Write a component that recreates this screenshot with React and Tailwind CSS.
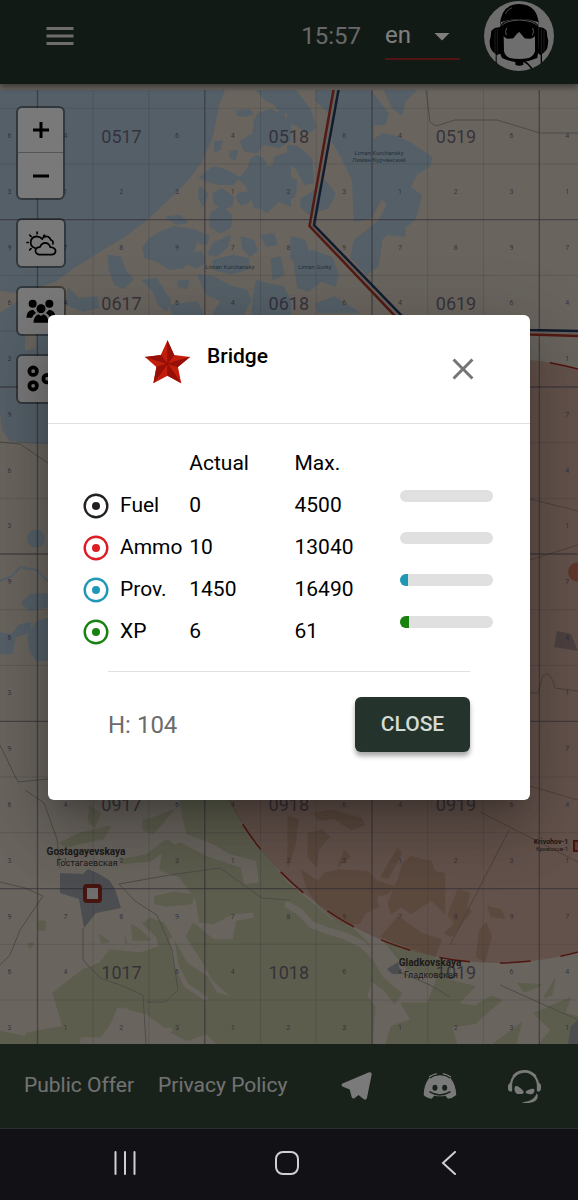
import React from 'react';
import { MdArrowDropDown, MdClose, MdMenu } from 'react-icons/md';
import { FaTeamspeak } from 'react-icons/fa';

const supplies = [
    { name: 'Fuel', actual: 0, max: 4500, ring: 'text-[#231f20]', bar: 'bg-[#231f20]' },
    { name: 'Ammo', actual: 10, max: 13040, ring: 'text-[#dd1c24]', bar: 'bg-[#dd1c24]' },
    { name: 'Prov.', actual: 1450, max: 16490, ring: 'text-[#1f98b5]', bar: 'bg-[#1f98b5]' },
    { name: 'XP', actual: 6, max: 61, ring: 'text-[#17820f]', bar: 'bg-[#17820f]' },
];

const App = () => (
    <div className="flex min-h-screen flex-col bg-[#111116] font-['Roboto',sans-serif]">
        <div className="relative flex grow flex-col">
            <TopBar />
            <main className="relative flex grow flex-col border-t-[6px] border-[#cdc4b8]">
                <MapCanvas />
                <MapControls />
            </main>
            <Footer />
            <div className="absolute inset-0 z-20 flex items-center justify-center bg-black/50 px-12 pb-3.5">
                <BridgeDialog />
            </div>
        </div>
        <SystemNav />
    </div>
);

const TopBar = () => (
    <header className="relative z-10 flex h-[84px] items-center bg-[#24342c] pr-6 pb-3 pl-[42px] shadow-[0_3px_6px_rgba(0,0,0,0.4)]">
        <button type="button" aria-label="Menu" className="text-[#dedbd6]">
            <MdMenu size={36} />
        </button>
        <span className="ml-auto text-2xl text-[#cfd0cf]">15:57</span>
        <div className="relative ml-6 w-[75px]">
            <select aria-label="Language" defaultValue="en" className="h-12 w-full appearance-none border-b-2 border-[#a52626] bg-transparent text-2xl text-white outline-none">
                <option>en</option>
                <option>ru</option>
            </select>
            <MdArrowDropDown size={36} className="pointer-events-none absolute top-1.5 right-0 text-white" />
        </div>
        <button type="button" aria-label="Profile" className="ml-6">
            <PilotAvatar />
        </button>
    </header>
);

const PilotAvatar = () => (
    <svg viewBox="28 3 210 210" className="size-[70px]">
        <circle cx="133" cy="108" r="105" fill="#dcdcdc" />
        <path d="M76 76 Q78 13 134 12 Q190 13 193 78 L190 66 Q136 48 80 66Z" fill="#000" />
        <path d="M92 42 Q98 28 112 23" fill="none" stroke="#aaa" strokeWidth="2.5" />
        <path d="M76 80 Q80 60 134 57 Q188 60 192 80 L190 160 L188 174 Q160 184 146 186 L146 194 Q134 200 122 194 L122 186 Q98 182 82 174 L76 160Z" fill="#000" />
        <path d="M82 77 Q88 63 134 60 Q180 63 187 77" fill="none" stroke="#c8c8c8" strokeWidth="2.5" />
        <path d="M87 108 Q94 120 114 115 L132 94 L150 115 Q172 120 181 108 L181 154 Q176 170 162 174 Q134 180 106 174 Q92 170 88 154Z" fill="#dcdcdc" />
        <path d="M86 84 Q86 78 98 77 Q134 72 170 77 Q182 78 182 84 L181 106 Q176 115 152 115 L143 103 L134 95 L124 104 L116 115 Q92 115 87 106Z" fill="#000" />
        <path d="M96 84 Q90 94 95 106 M174 84 Q180 94 173 106" fill="none" stroke="#aaa" strokeWidth="3" />
        <path d="M50 92 Q62 80 76 82 L78 160 L66 166 L66 190 L63 190 L63 162 Q48 152 46 138 Q42 124 48 110Z" fill="#000" />
        <path d="M216 92 Q206 80 192 82 L190 160 L198 166 L198 188 L202 188 L202 162 Q218 152 219 138 Q224 124 218 110Z" fill="#000" />
        <path d="M61 88V160 M68 86V160 M200 86V160 M208 88V158" fill="none" stroke="#777" strokeWidth="1.5" />
        <path d="M148 184 Q160 190 172 206" fill="none" stroke="#000" strokeWidth="5" />
    </svg>
);

// labels outside the viewport or fully behind the dialog are not drawn
const isVisible = (x, y) => x > 4 && x < 574 && y > 98 && y < 1040 && !(x > 40 && x < 538 && y > 300 && y < 804 && !(y < 316 && x > 60));

const MapCanvas = () => {
    const cols = [-130, 37.5, 204.8, 372, 539.3];
    const rows = [52.5, 219.7, 387, 554, 721.3, 888.6];
    const labels = ['05', '06', '07', '08', '09', '10'];
    const keypad = [7, 8, 9, 4, 5, 6, 1, 2, 3];
    return (
        <div className="flex h-0 grow overflow-hidden bg-[#d2c9bc]">
            <svg viewBox="0 90 578 954" preserveAspectRatio="xMidYMid slice" className="h-full w-full font-['Roboto',sans-serif]">
                <rect y="90" width="578" height="954" fill="#d2c9bc" />

                {/* Sea and lagoons */}
                <g fill="#a9bfcf" stroke="#a9bfcf" strokeWidth="6" strokeLinejoin="round">
                    <g transform="translate(0 84) scale(0.33333)">
                        <path d="M0 0H680L655 60L645 110L635 160L605 230L560 290L510 340L440 405L375 455L300 500L220 550L165 590L120 606L60 625L0 618Z" />
                        <path d="M770 18H870V80L845 90L825 60L800 50Z" />
                        <path d="M712 82L745 78L758 88L735 96L712 92Z" />
                        <path d="M775 90L810 78L850 95L870 120V170L835 190L790 180L770 205L735 200L722 172L760 150L765 110Z" />
                        <path d="M645 175L665 172L660 195L645 202Z" />
                        <path d="M690 205L712 200L705 225L692 220Z" />
                        <path d="M640 250L665 255L690 265L715 280L700 300L655 300L620 290L600 280Z" />
                        <path d="M770 215L790 225L800 250L820 245L825 220L870 205V365L835 350L800 385L785 372L765 370L755 340L740 305L718 285L740 262L755 225Z" />
                        <path d="M640 330L665 315L700 340L695 365L670 375L645 360Z" />
                        <path d="M715 330L745 325L750 350L725 362L712 345Z" />
                        <path d="M600 310L622 330L610 365L598 345Z" />
                        <path d="M635 385L665 370L695 395L690 430L660 445L630 425Z" />
                        <path d="M500 400L540 395L560 415L530 420Z" />
                        <path d="M450 465L480 445L520 430L560 435L590 440L585 490L570 520L550 550L510 555L470 530L435 520L430 490Z" />
                        <path d="M595 445L625 455L620 480L595 475Z" />
                        <path d="M640 480L690 455L680 490L650 515L625 510Z" />
                        <path d="M725 460L760 470L770 500L750 515L730 495Z" />
                        <path d="M565 510L605 505L615 535L590 550L565 540Z" />
                        <path d="M640 530L700 515L745 525L742 555L690 568L640 555Z" />
                        <path d="M785 455L820 450L830 480L800 485Z" />
                        <path d="M815 525L840 520L850 570L820 585Z" />
                        <path d="M325 515L360 520L375 560L398 585L370 612L345 600L330 560Z" />
                        <path d="M430 590L470 585L490 620L510 650L500 680L475 660L460 620Z" />
                        <path d="M535 592L565 590L560 612L535 606Z" />
                        <path d="M595 575L640 580L700 610L740 620L750 650L730 690H640L665 650L620 630Z" />
                        <path d="M205 615L235 645L290 640L295 670L250 680L200 660Z" />
                        <path d="M770 590L800 600L850 610L870 650V720H755L760 650Z" />
                        <path d="M0 690L60 650V720H0Z" />
                        <path d="M510 665L590 655L610 690H520Z" />
                    </g>
                    <g transform="translate(288 84) scale(0.33333)">
                        <path d="M0 18H20L65 75L82 130L60 145L20 120L0 110Z" />
                        <path d="M85 18H245L300 90L290 120L255 120V170L285 150L330 160L370 180L430 220L425 245L385 270L365 310L400 335L380 405L350 430V455L300 450L280 465L270 545L235 570L190 520L200 470L275 410L300 360L280 340L250 400L200 410L195 290L160 215L135 175L130 90L85 50Z" />
                        <path d="M290 18H385L350 50L340 90L315 70Z" />
                        <path d="M0 185L30 190L70 225L75 295L50 300L25 250L0 240Z" />
                        <path d="M40 345L75 325L110 290L140 330L120 370L65 390L40 370Z" />
                        <path d="M0 280L25 290L20 335L0 350Z" />
                        <path d="M10 460L50 470L65 520L40 560L10 520Z" />
                        <path d="M20 540L70 500L130 520L150 570L140 605L100 590L60 620L30 610Z" />
                        <path d="M85 660L140 640L210 685H90Z" />
                    </g>
                    <g transform="translate(0 320) scale(0.33333)">
                        <path d="M0 0H72V95L110 88V0H180V372L100 368L30 360L10 330L0 250Z" />
                        <circle cx="108" cy="656" r="24" />
                        <path d="M65 850L90 825L140 822V860L90 870Z" />
                        <path d="M0 940L35 945L60 915L90 910V935L45 950L35 1000H0Z" />
                        <path d="M85 950L110 905L150 895V1020H110L90 990Z" />
                        <path d="M0 782L35 770L60 742L110 750L150 790" fill="none" />
                    </g>
                </g>

                {/* Forest */}
                <g fill="#b9ba9b" stroke="#b9ba9b" strokeWidth="5" strokeLinejoin="round">
                    <g transform="translate(0 790) scale(0.33333)">
                        <path d="M540 30H690L735 120L870 290V780H670L620 730L560 750L520 730L440 670L350 650L330 700L300 740H240L235 775H60L80 730L190 710L160 610L210 570L250 540L300 520L330 480L420 490L480 470L470 440L430 400L450 385L490 400L520 450L560 520L620 560L650 610L700 625L640 570L600 500L560 440L580 400L640 450L700 450L710 395L765 385L760 365L700 370L640 400L600 395L590 330L540 260L480 240L490 180L540 160L620 200L720 235L730 285L780 280L770 210L690 190L640 160L560 130Z" />
                        <path d="M465 320L520 308L580 315L575 340L500 348L465 340Z" />
                        <path d="M180 160L240 130L330 110L310 145L240 160L200 170Z" />
                        <path d="M430 90L460 85L520 60L460 130L430 120Z" />
                        <path d="M360 210L440 195L500 150L520 165L450 212L370 220Z" />
                        <path d="M395 405L420 420L450 450L400 450Z M375 440L380 460 M300 435L325 455L305 458Z" />
                        <path d="M270 50L300 70L285 110L265 95Z M115 395H135V420H115Z M85 460L100 460L90 475Z" />
                        <path d="M0 725L70 740L60 760H0Z" />
                    </g>
                    <g transform="translate(288 790) scale(0.33333)">
                        <path d="M0 280L60 330L130 390L200 420L240 460L290 560L340 610L320 640L290 600L250 570L235 620L260 650L250 780H0Z" />
                        <path d="M290 455L440 505L490 520L480 570L560 590L510 640L560 650L610 620L640 630L560 700L490 710L510 780H290L310 710L370 690L340 640L420 640L450 560L360 540Z" />
                        <path d="M690 580L760 585L710 605Z M770 620L800 570L790 615Z M740 670L810 640L845 625L830 670L870 680V780H740L790 720Z M620 760L700 700L680 770Z" />
                    </g>
                </g>
                {/* Open ground between the woods */}
                <g fill="none" stroke="#d2c9bc" strokeWidth="7" strokeLinecap="round" strokeLinejoin="round">
                    <path d="M288 905L300 912L312 925L326 930L345 936L362 944L376 958L386 975L400 987" />
                    <path d="M125 1010L134 1016L142 1022L150 1034L170 1030M172 940L176 965L186 985L205 998" strokeWidth="5" />
                </g>
                <g transform="translate(288 790) scale(0.33333)" fill="#bcb09a" stroke="#bcb09a" strokeWidth="4" strokeLinejoin="round">
                    <path d="M80 70L130 60L220 85L230 105L190 120L140 85L90 90Z" />
                    <path d="M60 130L100 120L125 140L90 180L85 230L60 200Z" />
                    <path d="M0 80L30 90L20 170L0 230Z M150 230L170 180L185 200Z" />
                    <path d="M330 175L340 190L300 265L278 260Z" />
                    <path d="M40 240L90 275L110 250L150 240L240 245L270 275L320 290L300 310L265 320L270 350L230 370L215 400L160 405L95 350L60 300Z" />
                    <path d="M330 270L345 220L370 200L430 215L440 245L470 250V370L430 330L370 370L340 350L310 370L300 340Z" />
                    <path d="M510 300L545 310L535 350L550 365L490 440L470 430L500 400L480 375Z" />
                    <path d="M330 380L400 430L460 450L440 500L330 460L280 440Z M575 420L595 400L610 440L590 515L565 500Z M600 350L640 360L650 385L610 380Z" />
                </g>

                {/* Towns */}
                <g fill="#969aa0">
                    <path d="M60 873L83 874L88 869L99 874L109 880L115 889L121 908L96 913L84 928L79 899L60 893Z" />
                    <path d="M387 969L398 962L401 974L392 974Z M571 1026L578 1020V1044H568Z M557 631L571 634L578 651L554 647Z" />
                </g>
                <circle cx="578" cy="572" r="10" fill="#c98068" />

                {/* Roads and rivers */}
                <g fill="none" stroke="#99978d" strokeWidth="1">
                    <path d="M426 90L430 122L436 126L455 120L497 120L540 133H578" />
                    <path d="M25 790L44 803L57 839L60 868M0 882L25 888L43 896L20 930L10 955L0 965M83 928V960L100 978L120 985L143 995L146 1044" />
                    <path d="M119 884L135 901L157 915L172 950L178 990L165 1002L146 1002M119 884L170 875L220 868L262 898L290 900" />
                    <path d="M395 970L430 985L450 997M500 985L578 1020" />
                    <path d="M0 442L20 444L48 463M0 745L18 782L48 779M480 812L578 862M509 830L450 945M530 499L578 511M530 560L578 545M530 693H538L543 676Q550 668 555 688L578 691M530 786L578 800" />
                </g>

                {/* Airfield coverage */}
                <circle cx="497" cy="660.5" r="302.5" fill="#a83c28" fillOpacity="0.25" />
                <circle cx="497" cy="660.5" r="302.5" fill="none" stroke="#a32a1e" strokeWidth="1.5" strokeDasharray="31 30" strokeDashoffset="-14" />

                {/* Grid */}
                <g stroke="#5b5366" strokeOpacity="0.2" strokeWidth="1">
                    {cols.map((x) => [1, 2].map((n) => <path key={`${x}-${n}`} d={`M${x + n * 55.7} 90V1044`} />))}
                    {rows.map((y) => [1, 2].map((n) => <path key={`${y}-${n}`} d={`M0 ${y + n * 55.7}H578`} />))}
                </g>
                <g stroke="#5b5366" strokeOpacity="0.6" strokeWidth="1.3">
                    {cols.map((x) => <path key={x} d={`M${x} 90V1044`} />)}
                    {rows.map((y) => <path key={y} d={`M0 ${y}H578`} />)}
                </g>
                <g textAnchor="middle" fill="#544d66">
                    {rows.map((y, r) => cols.map((x, c) => (
                        <g key={`${x}-${y}`}>
                            {(isVisible(x + 84, y + 84) || r === 4) && c > 0 && c < 4 && (
                                <text x={x + 84} y={y + 90} fontSize="18" fillOpacity="0.8">{labels[r] + (16 + c)}</text>
                            )}
                            {keypad.map((n, i) => {
                                const dx = x + 28 + (i % 3) * 55.7;
                                const dy = y + 31 + Math.floor(i / 3) * 55.7;
                                return n !== 5 && isVisible(dx, dy) && (
                                    <text key={n} x={dx} y={dy - 1} fontSize="7" fillOpacity="0.8">{n}</text>
                                );
                            })}
                        </g>
                    )))}
                </g>

                {/* Front line */}
                <g fill="none" strokeWidth="2.5">
                    <path d="M335.5 90L311 225L399 318L530 333L578 334" stroke="#c9bdb2" />
                    <path d="M333.5 90L309.5 226L396 317L530 334.5L578 336" stroke="#a63326" />
                    <path d="M338.5 90L314 225L403 317L530 330L578 331" stroke="#24395c" />
                </g>

                <g textAnchor="middle" fontSize="9" fill="#3b3535">
                    <text x="86" y="855" fontSize="10" fontWeight="700">Gostagayevskaya</text>
                    <text x="87" y="866">Гостагаевская</text>
                    <text x="430" y="966" fontSize="10" fontWeight="700">Gladkovskaya</text>
                    <text x="431" y="978">Гладковская</text>
                    <text x="551" y="844" fontSize="7" fontWeight="700">Krivohov-1</text>
                    <text x="552" y="851" fontSize="6">Кривохов-1</text>
                    <g fontSize="6" fill="#4d6478">
                        <text x="379" y="155">Liman Kurchansky</text>
                        <text x="379" y="162">Лиман Курчанский</text>
                        <text x="230" y="269">Liman Kurchansky</text>
                        <text x="315" y="269">Liman Gorky</text>
                    </g>
                </g>
                <rect x="85" y="886" width="15" height="15" rx="2" fill="#dcdcdc" stroke="#8c2b1e" strokeWidth="4" />
                <rect x="574" y="841" width="11" height="10" fill="#c97364" stroke="#8c2b1e" strokeWidth="2" />
            </svg>
        </div>
    );
};

const MapControls = () => (
    <div className="absolute top-4 left-4 flex flex-col items-start gap-[18px]">
        <div className="flex w-[49px] flex-col rounded-md border-2 border-black/40 bg-[#f2f2f2] bg-clip-padding">
            <button type="button" aria-label="Zoom in" className="flex h-[45px] items-center justify-center border-b border-[#aaa]">
                <svg viewBox="0 0 16 16" className="size-4"><path d="M8 0V16M0 8H16" stroke="#000" strokeWidth="3" /></svg>
            </button>
            <button type="button" aria-label="Zoom out" className="flex h-[45px] items-center justify-center">
                <svg viewBox="0 0 16 16" className="size-4"><path d="M0 8H16" stroke="#000" strokeWidth="3" /></svg>
            </button>
        </div>
        <MapButton label="Weather">
            <svg viewBox="78 438 92 74" className="h-[25px] w-[31px]" fill="none" stroke="#000" strokeWidth="5" strokeLinecap="round">
                <path d="M104 488Q92 484 92 471Q93 455 110 454Q121 455 126 462" />
                <path d="M126 460Q134 451 144 455Q151 459 151 464Q160 466 158 476" />
                <path d="M117 508Q106 506 106 496Q107 486 119 486Q124 473 136 473Q148 475 150 486Q165 487 166 498Q164 508 155 508Z" />
                <path d="M111 441V446M89 450L93 454M81 472H85M89 494L93 490M133 450L130 453" />
            </svg>
        </MapButton>
        <MapButton label="Squads">
            <svg viewBox="78 642 90 72" className="h-6 w-[30px]" fill="#000">
                <circle cx="98" cy="656" r="12" />
                <circle cx="148" cy="656" r="12" />
                <path d="M79 698Q80 675 99 674L108 684Q98 690 96 698ZM167 698Q166 675 147 674L138 684Q148 690 150 698Z" />
                <circle cx="123" cy="671" r="15" stroke="#f2f2f2" strokeWidth="3" />
                <path d="M100 713Q102 692 116 688L123 693L130 688Q144 692 146 713Z" />
            </svg>
        </MapButton>
        <MapButton label="Layers">
            <svg viewBox="80 134 88 86" className="size-[30px]" fill="none" stroke="#000" strokeWidth="11">
                <circle cx="101" cy="154" r="11" />
                <circle cx="101" cy="197" r="11" />
                <circle cx="142" cy="176" r="11" />
            </svg>
        </MapButton>
    </div>
);

const MapButton = ({ label, children }) => (
    <button type="button" aria-label={label} className="flex size-[50px] items-center justify-center rounded-md border-2 border-black/40 bg-[#f2f2f2] bg-clip-padding">
        {children}
    </button>
);

const BridgeDialog = () => (
    <section role="dialog" aria-labelledby="dialog-title" className="w-full rounded-md bg-white text-[21px] text-black shadow-[0_16px_22px_-10px_rgba(0,0,0,0.2),0_36px_57px_4px_rgba(0,0,0,0.14),0_14px_69px_12px_rgba(0,0,0,0.12)]">
        <div className="flex h-[109px] items-start border-b border-[#e0e0e0] pt-[25px] pr-[49px] pl-[97px]">
            <RedStar />
            <h2 id="dialog-title" className="ml-[17px] leading-8 font-medium">Bridge</h2>
            <button type="button" aria-label="Close dialog" className="mt-[11px] ml-auto text-[#757575]">
                <MdClose size={36} />
            </button>
        </div>
        <div className="pt-[19px] pr-[25px] pb-12 pl-9">
            <table className="w-full table-fixed text-left">
                <thead>
                    <tr className="h-[42px]">
                        <td></td>
                        <th className="font-normal">Actual</th>
                        <th className="font-normal">Max.</th>
                        <td></td>
                    </tr>
                </thead>
                <tbody>
                    {supplies.map((item) => <SupplyRow key={item.name} item={item} />)}
                </tbody>
            </table>
            <div className="mt-[18px] mr-[35px] ml-6 border-t border-[#e0e0e0] pt-[25px]">
                <div className="flex items-center justify-between">
                    <span className="text-2xl text-[#6b6b6b]">H: 104</span>
                    <button type="button" className="h-[55px] w-[115px] rounded-md bg-[#24332b] font-medium text-[#d5dbd5] shadow-[0_4px_5px_rgba(0,0,0,0.35)]">CLOSE</button>
                </div>
            </div>
        </div>
    </section>
);

const SupplyRow = ({ item }) => (
    <tr className="h-[42px]">
        <th className="font-normal whitespace-nowrap">
            <div className="flex items-center gap-3">
                <svg viewBox="0 0 24 24" className={`size-6 shrink-0 overflow-visible ${item.ring}`}>
                    <circle cx="12" cy="12" r="11.3" fill="none" stroke="currentColor" strokeWidth="2.4" />
                    <circle cx="12" cy="12" r="4" fill="currentColor" />
                </svg>
                {item.name}
            </div>
        </th>
        <td>{item.actual}</td>
        <td>{item.max}</td>
        <td className="pt-[5px] pr-3 align-top">
            <div role="progressbar" aria-label={item.name} aria-valuenow={item.actual} aria-valuemax={item.max} className="h-3 overflow-hidden rounded-full bg-[#e0e0e0]">
                <div className={`h-full ${item.bar}`} style={{ width: `${(item.actual / item.max) * 100}%` }}></div>
            </div>
        </td>
    </tr>
);

const RedStar = () => (
    <svg viewBox="290 90 134 130" className="h-[44px] w-[45px]">
        <path d="M357 90L377 134L424 140L388 170L398 218L357 196L315 218L324 170L290 140L337 134Z" fill="#c41e0a" />
        <path d="M357 90L377 134L357 160ZM424 140L388 170L357 160ZM398 218L357 196V160ZM315 218L324 170L357 160ZM290 140L337 134L357 160Z" fill="#961007" />
        <path d="M357 90V196M424 140L324 170M290 140L388 170M315 218L377 134M398 218L337 134" stroke="#7d0d06" strokeWidth="1" />
    </svg>
);

const Footer = () => (
    <footer className="flex h-[85px] items-center border-b border-[#52605a] bg-[#304436] pr-3 pl-6 text-[21px] text-[#e2e5e2]">
        <a href="#offer" className="whitespace-nowrap">Public Offer</a>
        <a href="#privacy" className="ml-6 whitespace-nowrap">Privacy Policy</a>
        <div className="ml-auto flex">
            <a href="#telegram" aria-label="Telegram" className="flex w-[84px] items-center justify-center">
                <svg viewBox="921 96 85 83" preserveAspectRatio="none" className="h-7 w-[31px]" fill="#f4f4f4">
                    <path d="M925 130L998 97Q1006 95 1005 104L992 174Q988 182 982 175L969 164L958 174Q952 176 950 169L945 148L925 139Q920 134 925 130Z" />
                </svg>
            </a>
            <a href="#discord" aria-label="Discord" className="flex w-[84px] items-center justify-center">
                <svg viewBox="1147 98 94 78" preserveAspectRatio="none" className="h-[26px] w-[34px]">
                    <path d="M1164 113Q1178 105 1194 105Q1210 105 1223 113Q1238 134 1239 164Q1229 174 1216 175L1209 166Q1194 170 1178 166L1171 175Q1157 174 1149 164Q1149 134 1164 113Z" fill="#f4f4f4" />
                    <path d="M1165 154Q1193 174 1223 154" fill="none" stroke="#304436" strokeWidth="4" />
                    <ellipse cx="1180" cy="142" rx="7" ry="9" fill="#304436" />
                    <ellipse cx="1207" cy="142" rx="7" ry="9" fill="#304436" />
                    <path d="M1167 113Q1174 106 1185 103M1202 103Q1214 106 1221 113" fill="none" stroke="#304436" strokeWidth="4" />
                    <path d="M1164 110Q1172 103 1185 100M1202 100Q1215 103 1224 110" fill="none" stroke="#f4f4f4" strokeWidth="4" />
                </svg>
            </a>
            <a href="#teamspeak" aria-label="TeamSpeak" className="flex w-[84px] items-center justify-center text-[#f4f4f4]">
                <FaTeamspeak size={33} />
            </a>
        </div>
    </footer>
);

const SystemNav = () => (
    <nav className="grid h-[71px] grid-cols-3 place-items-center pr-12 pb-1 pl-11 text-[#d0d0d4]">
        <button type="button" aria-label="Recent apps">
            <svg viewBox="0 0 24 24" className="size-6" stroke="currentColor" strokeWidth="2" strokeLinecap="round"><path d="M2.5 1V23M12 1V23M21.5 1V23" /></svg>
        </button>
        <button type="button" aria-label="Home">
            <svg viewBox="0 0 24 24" className="size-6" fill="none" stroke="currentColor" strokeWidth="2"><rect x="1" y="1" width="22" height="22" rx="7" /></svg>
        </button>
        <button type="button" aria-label="Back">
            <svg viewBox="0 0 24 24" className="size-6" fill="none" stroke="currentColor" strokeWidth="2" strokeLinecap="round"><path d="M18 1L6 12L18 23" /></svg>
        </button>
    </nav>
);

export default App;
